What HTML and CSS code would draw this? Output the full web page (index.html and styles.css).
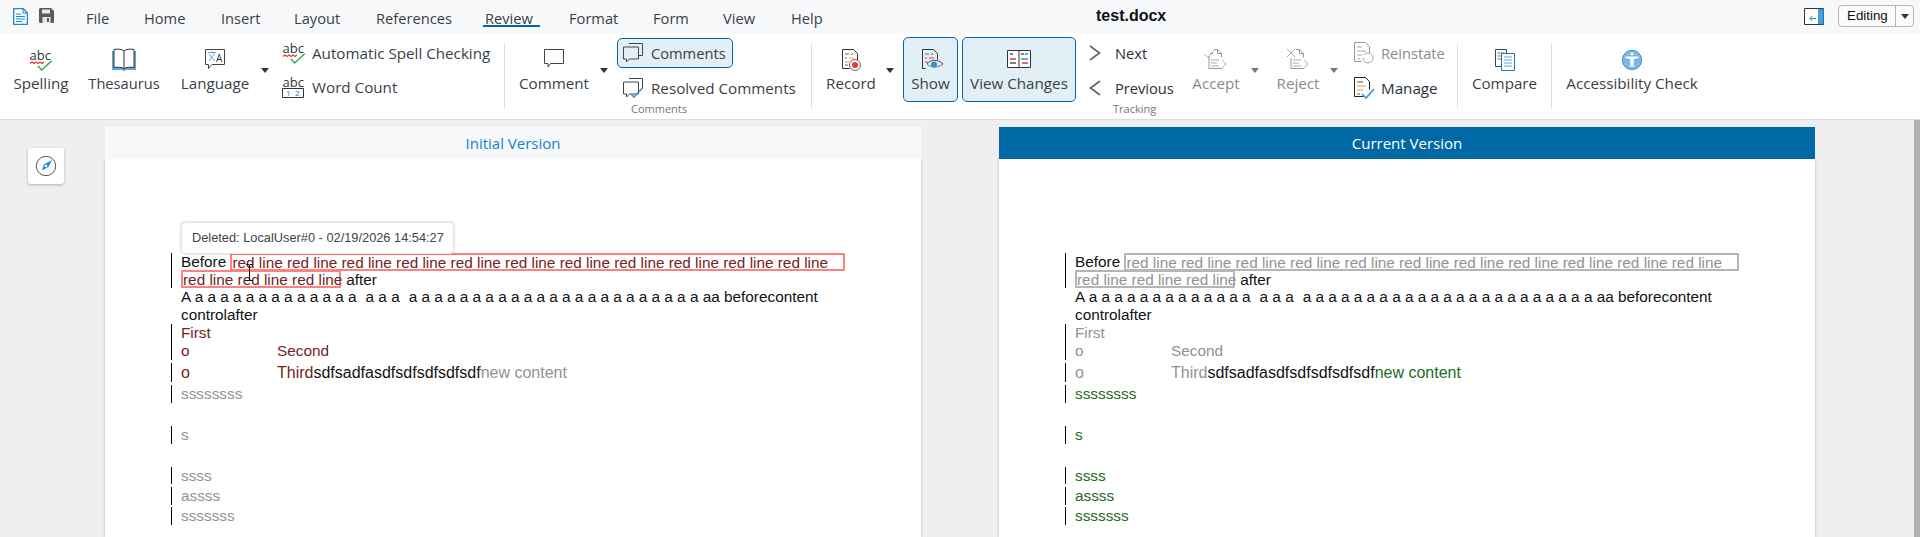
FILE: index.html
```html
<!DOCTYPE html>
<html lang="en">
<head>
<meta charset="utf-8">
<title>test.docx</title>
<link rel="stylesheet" href="styles.css">
</head>
<body>
<header class="titlebar">
  <svg class="doc-icon" width="15" height="17" viewBox="0 0 15 17"><path d="M.7.7h9.6l4 4v11.6H.7z" fill="#fff" stroke="#1b8ad3" stroke-width="1.3"/><path d="M10 .7v4.3h4.3" fill="none" stroke="#1b8ad3"/><path d="M3 6h5M3 8.5h9M3 11h9M3 13.500h6" stroke="#1b8ad3"/></svg>
  <svg class="save-icon" width="15" height="15" viewBox="0 0 15 15"><path d="M1.500 0H12l3 3v10.500a1.500 1.500 0 0 1-1.500 1.500h-12A1.500 1.500 0 0 1 0 13.500v-12A1.500 1.500 0 0 1 1.500 0z" fill="#5a5a5a"/><path d="M3 1.500h8v4H3zM3.500 9h8v6h-8z" fill="#e8e8e8"/><path d="M8 10h2v4H8z" fill="#5a5a5a"/></svg>
  <nav class="menu">
    <span class="m-file">File</span>
    <span class="m-home">Home</span>
    <span class="m-insert">Insert</span>
    <span class="m-layout">Layout</span>
    <span class="m-refs">References</span>
    <span class="m-review">Review</span>
    <span class="m-format">Format</span>
    <span class="m-form">Form</span>
    <span class="m-view">View</span>
    <span class="m-help">Help</span>
  </nav>
  <div class="doc-title">test.docx</div>
  <svg class="side-icon" width="20" height="17" viewBox="0 0 20 17"><path d="M.5.500h19v16H.500z" fill="#fff" stroke="#333"/><path d="M14.500 1h5v15h-5z" fill="#4a9fe0" stroke="#1b78bd" stroke-width=".6"/><path d="M12 10.500H6M8.500 8 6 10.500 8.500 13" fill="none" stroke="#1b8ad3"/></svg>
  <div class="mode"><span class="mode-label">Editing</span><span class="mode-drop"><i class="tri"></i></span></div>
</header>

<section class="ribbon">
  <div class="big spelling">
    <svg class="ico ico-tall" width="24" height="30" viewBox="0 -6 24 30"><text x=".5" y="12" class="ico-text">abc</text><path d="M1 15.500l2-1.500 2 1.500 2-1.500 2 1.500 2-1.500 2 1.500 2-1.500" fill="none" stroke="#e4393c" stroke-width="1.200"/><path d="M9 18l3.700 4 10-9.300" fill="none" stroke="#2fa84f" stroke-width="1.500"/></svg>
    <span class="label">Spelling</span>
  </div>
  <div class="big thesaurus">
    <svg class="ico" width="24" height="24" viewBox="0 0 24 24"><path d="M0 3h24v19H13v1h-2v-1H0z" fill="#5ba6de"/><path d="M2 1.500c4-.8 8-.3 10 1.500 2-1.800 6-2.300 10-1.500v18c-4-.5-8-.2-10 1-2-1.200-6-1.500-10-1z" fill="#fff" stroke="#333" stroke-width="1"/><path d="M12 3v18" stroke="#333"/></svg>
    <span class="label narrow">Thesaurus</span>
  </div>
  <div class="big language">
    <svg class="ico" width="24" height="24" viewBox="0 0 24 24"><path d="M2.500 1.500h19v15H9l-3.500 4v-4h-3z" fill="#fff" stroke="#444"/><path d="M5 4.500h8M9 3v1.500M6 13l5.500-8M6 6l6 7" fill="none" stroke="#6aa6d8"/><text x="13" y="14" class="ico-a">A</text></svg>
    <span class="label">Language</span>
  </div>
  <div class="arrow"><i class="tri"></i></div>

  <div class="stack stack-a">
    <div class="row">
      <svg class="row-ico ico-tall" width="24" height="30" viewBox="0 -6 24 30"><text x=".5" y="12" class="ico-text">abc</text><path d="M1 15.500l2-1.500 2 1.500 2-1.500 2 1.500 2-1.500 2 1.500 2-1.500" fill="none" stroke="#e4393c" stroke-width="1.200"/><path d="M9 18l3.700 4 10-9.300" fill="none" stroke="#2fa84f" stroke-width="1.500"/></svg>
      <span class="label">Automatic Spell Checking</span>
    </div>
    <div class="row">
      <svg class="row-ico ico-tall" width="24" height="30" viewBox="0 -6 24 30"><text x=".5" y="11.500" class="ico-text">abc</text><path d="M.5 13.500h21v9H.5z" fill="#fff" stroke="#333"/><text x="4" y="21" class="ico-num">1</text><text x="13" y="21" class="ico-num">2</text></svg>
      <span class="label">Word Count</span>
    </div>
  </div>
  <div class="sep"></div>

  <div class="big comment">
    <svg class="ico" width="24" height="24" viewBox="0 0 24 24"><path d="M2.500 1.500h19v14h-13l-2.500 3.500v-3.500h-3.500z" fill="#fff" stroke="#444"/></svg>
    <span class="label">Comment</span>
  </div>
  <div class="arrow arrow-comment"><i class="tri"></i></div>

  <div class="stack stack-b">
    <div class="row row-on">
      <svg class="row-ico" width="22" height="22" viewBox="0 0 22 22"><path d="M7 1.500h13.500v12H17" fill="none" stroke="#444"/><path d="M1.500 5h15v12h-9l-3 3v-3h-3z" fill="#e3eff6" stroke="#444"/></svg>
      <span class="label narrow">Comments</span>
    </div>
    <div class="row row-res">
      <svg class="row-ico" width="22" height="22" viewBox="0 0 22 22"><path d="M7 1.500h13.500v10" fill="none" stroke="#444"/><path d="M1.500 5h15v12h-9l-3 3v-3h-3z" fill="#fff" stroke="#444"/><path d="M9 17l3 3 8.500-9" fill="none" stroke="#3a94d8" stroke-width="1.600"/></svg>
      <span class="label">Resolved Comments</span>
    </div>
    <div class="caption">Comments</div>
  </div>
  <div class="sep"></div>

  <div class="big record">
    <svg class="ico" width="24" height="24" viewBox="0 0 24 24"><path d="M3.500 1.500h11l4 4v8M3.500 1.500v19h7" fill="#fff" stroke="#333"/><path d="M6 6h4M12 6h2M6 10h2" stroke="#666"/><path d="M10 10h5M6 14h4" stroke="#ef9a3c"/><path d="M6 17h3" stroke="#666"/><circle cx="16" cy="17" r="5.500" fill="#fff" stroke="#444" stroke-width=".8"/><circle cx="16" cy="17" r="3" fill="#e4393c"/></svg>
    <span class="label">Record</span>
  </div>
  <div class="arrow arrow-record"><i class="tri"></i></div>

  <div class="big on show">
    <svg class="ico" width="24" height="24" viewBox="0 0 24 24"><path d="M3.500 1.500h11l4 4v6M3.500 1.500v19h3" fill="none" stroke="#333"/><path d="M6 6h4M12 6h2M6 10h2" stroke="#666"/><path d="M10 10h5M6 14h3" stroke="#e4393c"/><path d="M8 16c4-5 11-5 16 0" fill="#e3eff6" stroke="#444"/><path d="M8 16c4 4 11 4 16 0" fill="none" stroke="#444" stroke-width=".7"/><circle cx="15" cy="16.500" r="3" fill="#3a8fd0"/></svg>
    <span class="label">Show</span>
  </div>
  <div class="big on viewchanges">
    <svg class="ico" width="24" height="24" viewBox="0 0 24 24"><path d="M.5 2.500h23v17H.5z" fill="#fff" stroke="#333" stroke-width="1"/><path d="M11.500 2v18h1V2z" fill="#333"/><path d="M3 6h3M3 15h6M14 6h3" stroke="#555" stroke-width="1.500"/><path d="M18 6h3M14 11h7" stroke="#3a94d8" stroke-width="1.500"/><path d="M3 11h6M15 15h6" stroke="#e4393c" stroke-width="1.500"/></svg>
    <span class="label">View Changes</span>
  </div>

  <div class="stack stack-c">
    <div class="row">
      <svg class="chev" width="12" height="16" viewBox="0 0 12 16"><path d="M1 1l9.500 7L1 15" fill="none" stroke="#666" stroke-width="1.700"/></svg>
      <span class="label label-dark narrow">Next</span>
    </div>
    <div class="row">
      <svg class="chev" width="12" height="16" viewBox="0 0 12 16"><path d="M11 1L1.500 8 11 15" fill="none" stroke="#666" stroke-width="1.700"/></svg>
      <span class="label label-dark narrow">Previous</span>
    </div>
    <div class="caption caption-c">Tracking</div>
  </div>

  <div class="big accept off">
    <svg class="ico" width="24" height="24" viewBox="0 0 24 24"><path d="M6 5.500h3M13.500 1.500l4 4h-4zM13.500 1.500H10M17.500 5.500v4M5 8v12.500h13" fill="none" stroke="#999"/><path d="M.5 6l3.500 3.500L11 1.500" fill="none" stroke="#aaa"/><path d="M7 12h8M7 15h6M7 18h8M18 12l4 4-4 4" fill="none" stroke="#aaa"/></svg>
    <span class="label">Accept</span>
  </div>
  <div class="arrow arrow-off"><i class="tri"></i></div>
  <div class="big reject off">
    <svg class="ico" width="24" height="24" viewBox="0 0 24 24"><path d="M13.500 1.500l4 4h-4zM13.500 1.500H10M17.500 5.500v4M5 10v10.500h13" fill="none" stroke="#999"/><path d="M1 1l8 8M9 1l-8 8" fill="none" stroke="#aaa"/><path d="M7 12h8M7 15h6M7 18h8M18 12l4 4-4 4" fill="none" stroke="#aaa"/></svg>
    <span class="label">Reject</span>
  </div>
  <div class="arrow arrow-off arrow-reject"><i class="tri"></i></div>

  <div class="stack stack-d">
    <div class="row off">
      <svg class="row-ico" width="24" height="24" viewBox="0 0 24 24"><path d="M3.500 1.500h11l4 4v7M3.500 1.500v19h7" fill="#fff" stroke="#999"/><path d="M6 6h5M6 10h9M6 14h5M6 18h3" stroke="#aaa"/><path d="M12 17a5 5 0 1 0 2-4l-1.500 1" fill="none" stroke="#aaa"/></svg>
      <span class="label narrow">Reinstate</span>
    </div>
    <div class="row">
      <svg class="row-ico" width="24" height="24" viewBox="0 0 24 24"><path d="M3.500 1.500h11l4 4v8M3.500 1.500v19h9" fill="#fff" stroke="#222"/><path d="M6 6h6" stroke="#555"/><path d="M6 10h9M6 14h6" stroke="#ef9a3c"/><path d="M6 18h3" stroke="#555"/><path d="M11 18l4 4 8-9" fill="none" stroke="#3a94d8" stroke-width="1.600"/></svg>
      <span class="label label-dark">Manage</span>
    </div>
  </div>
  <div class="sep"></div>

  <div class="big compare">
    <svg class="ico" width="24" height="24" viewBox="0 0 24 24"><path d="M2.500 1.500h11v17h-11z" fill="#fff" stroke="#444"/><path d="M4.500 5h7M4.500 8h7M4.500 11h7" stroke="#777"/><path d="M8.500 5.500h13v17h-13z" fill="#fff" stroke="#1b78bd"/><path d="M11 9h8M11 12h8M11 15h8M11 18h8" stroke="#5ba6de"/></svg>
    <span class="label">Compare</span>
  </div>
  <div class="sep"></div>
  <div class="big access">
    <svg class="ico" width="24" height="24" viewBox="0 0 24 24"><circle cx="12" cy="12" r="9.700" fill="#7db9e8" stroke="#1b78bd" stroke-width=".8"/><circle cx="12" cy="5.800" r="1.600" fill="#fff"/><path d="M5.500 8.500h13v1.500l-4.700 1v8h-1.300l-.5-4.500-.5 4.500h-1.300v-8l-4.700-1z" fill="#fff"/></svg>
    <span class="label">Accessibility Check</span>
  </div>
</section>

<main class="workspace">
  <aside class="rail">
    <button class="nav-btn" type="button" aria-label="Navigator">
      <svg width="22" height="22" viewBox="0 0 22 22"><circle cx="11" cy="11" r="9.700" fill="#fff" stroke="#555"/><path d="M17 5l-3.500 7L7 15.500 9 9.500z" fill="#1b8ad3"/><circle cx="11" cy="11" r="1.300" fill="#fff"/></svg>
    </button>
  </aside>

  <article class="panel">
    <div class="panel-head head-initial">Initial Version</div>
    <div class="page page-initial">
      <div class="tooltip">Deleted: LocalUser#0 - 02/19/2026 14:54:27</div>
      <svg class="ibeam" width="9" height="17" viewBox="0 0 9 17"><path d="M1 .5h3l.500.5.500-.5h3M1 16.500h3l.500-.5.500.5h3M4.500 1v15" fill="none" stroke="#111"/></svg>
      <div class="para p-a">
        <div class="ln">Before<span class="gap1"> </span><span class="box box-red long del-text">red line red line red line red line red line red line red line red line red line red line red line</span></div>
        <div class="ln"><span class="box box-red short del-text">red line red line red line</span><span class="after"> after</span></div>
      </div>
      <div class="para plain">
        <div class="ln ln-18">A a a a a a a a a a a a a a<span class="sp"> </span>a a a<span class="sp"> </span>a a a a a a a a a a a a a a a a a a a a a a a aa beforecontent</div>
        <div class="ln ln-18">controlafter</div>
      </div>
      <div class="para p-b del-text">
        <div class="ln ln-18">First</div>
        <div class="ln ln-18 list"><span class="bullet">o</span>Second</div>
      </div>
      <div class="para p-c big-text">
        <div class="ln ln-19 list"><span class="bullet del-text">o</span><span class="del-text">Third</span>sdfsadfasdfsdfsdfsdfsdf<span class="mute">new content</span></div>
      </div>
      <div class="para p-d mute"><div class="ln">ssssssss</div></div>
      <div class="para p-e mute"><div class="ln ln-18">s</div></div>
      <div class="para p-e mute"><div class="ln">ssss</div></div>
      <div class="para p-f mute"><div class="ln ln-18">assss</div></div>
      <div class="para p-g mute"><div class="ln ln-18">sssssss</div></div>
    </div>
  </article>

  <article class="panel panel-right">
    <div class="panel-head head-current">Current Version</div>
    <div class="page">
      <div class="para p-a">
        <div class="ln">Before<span class="gap1"> </span><span class="box box-gray long mute">red line red line red line red line red line red line red line red line red line red line red line</span></div>
        <div class="ln"><span class="box box-gray short mute">red line red line red line</span><span class="after"> after</span></div>
      </div>
      <div class="para plain">
        <div class="ln ln-18">A a a a a a a a a a a a a a<span class="sp"> </span>a a a<span class="sp"> </span>a a a a a a a a a a a a a a a a a a a a a a a aa beforecontent</div>
        <div class="ln ln-18">controlafter</div>
      </div>
      <div class="para p-b mute">
        <div class="ln ln-18">First</div>
        <div class="ln ln-18 list"><span class="bullet">o</span>Second</div>
      </div>
      <div class="para p-c big-text">
        <div class="ln ln-19 list"><span class="bullet mute">o</span><span class="mute">Third</span>sdfsadfasdfsdfsdfsdfsdf<span class="ins">new content</span></div>
      </div>
      <div class="para p-d ins"><div class="ln">ssssssss</div></div>
      <div class="para p-e ins"><div class="ln ln-18">s</div></div>
      <div class="para p-e ins"><div class="ln">ssss</div></div>
      <div class="para p-f ins"><div class="ln ln-18">assss</div></div>
      <div class="para p-g ins"><div class="ln ln-18">sssssss</div></div>
    </div>
  </article>

  <div class="scroll-thumb"></div>
</main>
</body>
</html>
```

FILE: styles.css
```css
* { box-sizing: border-box; }
html, body { margin: 0; padding: 0; }
body {
  width: 1920px;
  height: 537px;
  overflow: hidden;
  background: #efefef;
  display: flex;
  flex-direction: column;
  font-family: "Open Sans", "Noto Sans", sans-serif;
  color: #333;
}

/* Title bar */
.titlebar {
  height: 33px;
  background: #f7f8fa;
  display: flex;
  align-items: flex-start;
  flex: none;
}
.doc-icon { margin: 8px 0 0 13px; flex: none; }
.save-icon { margin: 8px 0 0 11px; flex: none; }
.menu {
  display: flex;
  margin-left: 32px;
  width: 750px;
  font-size: 14.67px;
  line-height: 20px;
  color: #3a3f47;
  padding-top: 8px;
}
.menu span { display: block; }
.m-file { width: 58px; }
.m-home { width: 77px; }
.m-insert { width: 73px; }
.m-layout { width: 82px; }
.m-refs { width: 109px; }
.m-review { width: 84px; position: relative; }
.m-review::after {
  content: "";
  position: absolute;
  left: -2px;
  top: 17px;
  width: 57px;
  height: 2px;
  background: #0069a5;
}
.m-format { width: 84px; }
.m-form { width: 70px; }
.m-view { width: 68px; }
.doc-title {
  margin-left: 260px;
  width: 120px;
  font: bold 16px/20px "Liberation Sans", Arial, sans-serif;
  color: #111;
  padding-top: 6px;
  height: 26px;
  box-sizing: content-box;
}
.side-icon { margin: 8px 0 0 588px; flex: none; }
.mode {
  margin: 5px 0 0 14px;
  width: 76px;
  height: 22px;
  display: flex;
  border: 1px solid #b4b4b4;
  border-radius: 4px;
  background: #fbfbfc;
  font: 13.33px/20px "Liberation Sans", Arial, sans-serif;
  color: #111;
  flex: none;
}
.mode-label { width: 57px; padding-left: 8px; border-right: 1px solid #b4b4b4; }
.mode-drop { flex: 1; display: flex; align-items: center; justify-content: center; }

.tri {
  display: block;
  width: 0;
  height: 0;
  border-left: 4px solid transparent;
  border-right: 4px solid transparent;
  border-top: 5px solid #333;
}

/* Ribbon */
.ribbon {
  height: 87px;
  flex: none;
  background: #fff;
  border-bottom: 1px solid #dcdcdc;
  display: flex;
  padding-left: 5px;
  font-size: 15.2px;
  line-height: 20px;
  color: #3a3f47;
}
.big {
  display: flex;
  flex-direction: column;
  align-items: center;
  height: 86px;
  padding-top: 15px;
  flex: none;
  white-space: nowrap;
}
.ico { display: block; height: 24px; flex: none; margin-bottom: 1px; }
.ico-tall { height: 30px; margin-top: -6px; }
.ico-text { font: 13px "Open Sans", sans-serif; fill: #333; }
.ico-a { font: 10px "Open Sans", sans-serif; fill: #333; }
.ico-num { font: 8px "Open Sans", sans-serif; fill: #1b78bd; }
.label { display: block; white-space: nowrap; }
.narrow { font-size: 14.67px; }
.label-dark { color: #2c3138; }
.big.on {
  height: 65px;
  margin-top: 4px;
  padding-top: 10px;
  border: 1px solid #0069a5;
  border-radius: 5px;
  background: #e3eff6;
}
.off { color: #8a8a8a; }
.spelling { width: 72px; }
.thesaurus { width: 94px; }
.language { width: 88px; }
.arrow {
  width: 12px;
  flex: none;
  display: flex;
  justify-content: center;
  padding-top: 35px;
}
.arrow-off .tri { border-top-color: #777; }
.arrow-comment { margin-left: 5px; }
.arrow-record { margin-left: 2px; }
.arrow-reject { margin-left: 0; }
.stack { display: flex; flex-direction: column; padding-top: 5px; flex: none; position: relative; }
.row { display: flex; align-items: center; height: 30px; white-space: nowrap; }
.row + .row { margin-top: 5px; }
.row-ico { flex: none; display: block; }
.stack-a { margin-left: 11px; width: 222px; }
.stack-a .row-ico { margin-right: 6px; }
.stack-a .row + .row { margin-top: 4px; }
.sep {
  width: 1px;
  height: 64px;
  margin-top: 11px;
  background: #dcdcdc;
  flex: none;
}
.comment { width: 78px; margin-left: 10px; }
.stack-b { margin-left: 7px; width: 194px; }
.row-on {
  width: 116px;
  border: 1px solid #0069a5;
  border-radius: 5px;
  background: #e3eff6;
  padding-left: 4px;
}
.row-res { padding-left: 5px; }
.stack-b .row-ico { margin-right: 7px; }
.caption {
  font-size: 11px;
  line-height: 12px;
  margin: 0 0 0 14px;
  color: #6f7680;
}
.record { width: 62px; margin-left: 8px; }
.show { width: 55px; margin-left: 7px; }
.viewchanges { width: 114px; margin-left: 4px; }
.stack-c { margin-left: 10px; width: 100px; }
.chev { flex: none; display: block; margin: 0 14px 0 3px; }
.caption-c { margin-left: 27px; }
.accept { width: 60px; }
.accept + .arrow { margin-left: 3px; }
.reject { width: 60px; margin-left: 7px; }
.stack-d { margin-left: 10px; width: 107px; }
.stack-d .row-ico { margin: 0 6px 0 1px; }
.compare { width: 93px; }
.access { width: 160px; }

/* Workspace */
.workspace {
  flex: 1;
  min-height: 0;
  display: flex;
  padding-top: 7px;
  position: relative;
}
.rail { width: 105px; flex: none; padding: 21px 0 0 28px; }
.nav-btn {
  width: 36px;
  height: 36px;
  border: 0;
  border-radius: 3px;
  background: #fff;
  box-shadow: 0 1px 3px rgba(0, 0, 0, .28);
  padding: 7px;
  display: block;
}
.nav-btn svg { display: block; }
.panel {
  width: 816px;
  flex: none;
  display: flex;
  flex-direction: column;
}
.panel-right { margin-left: 78px; }
.panel-head {
  height: 32px;
  flex: none;
  text-align: center;
  font-size: 15px;
  line-height: 32px;
  position: relative;
  z-index: 1;
}
.head-initial { background: #f7f8fa; color: #1683c7; }
.head-current { background: #0069a5; color: #fff; }
.page {
  flex: 1;
  background: #fff;
  box-shadow: 0 0 3px rgba(0, 0, 0, .22);
  padding-top: 94px;
  position: relative;
  font: 15.33px/17.500px "Liberation Sans", Arial, sans-serif;
  color: #111;
}
.tooltip {
  position: absolute;
  left: 76px;
  top: 63px;
  width: 273px;
  height: 32px;
  padding-left: 10px;
  background: #fff;
  border: 1px solid #e6e6e6;
  border-radius: 4px;
  box-shadow: 0 0 3px rgba(0, 0, 0, .2);
  font-size: 12.8px;
  line-height: 30px;
  color: #444;
  z-index: 2;
  white-space: nowrap;
}
.ibeam { position: absolute; left: 140px; top: 105px; z-index: 2; }
.para {
  margin-left: 66px;
  border-left: 1px solid #000;
  padding-left: 9px;
  white-space: nowrap;
}
.plain { border-left-color: transparent; }
.ln { height: 17.500px; display: flex; align-items: center; }
.ln-18 { height: 18px; }
.ln-19 { height: 19px; }
.gap1 { white-space: pre; }
.box {
  display: block;
  height: 18px;
  line-height: 15px;
  border: 2px solid;
  border-radius: 1px;
  flex: none;
}
.p-a .ln:first-child { white-space: pre; }
.box-red { border-color: #ff8080; }
.box-gray { border-color: #b5b5b5; }
.long { width: 615px; margin-left: 0; }
.short { width: 160px; }
.after { white-space: pre; margin-left: 1px; }
.sp { display: inline-block; width: 9px; }
.del-text { color: #722424; }
.mute { color: #929292; }
.ins { color: #1d6b1d; }
.big-text { font-size: 16px; }
.list { position: relative; }
.bullet { display: inline-block; width: 96px; flex: none; }
.p-c { margin-top: 3px; }
.p-d { margin-top: 3px; }
.p-e { margin-top: 23px; }
.p-f { margin-top: 3px; }
.p-g { margin-top: 2px; }

.scroll-thumb {
  position: absolute;
  right: 0;
  top: 0;
  bottom: 0;
  width: 6px;
  background: #b3b3b3;
}
```
